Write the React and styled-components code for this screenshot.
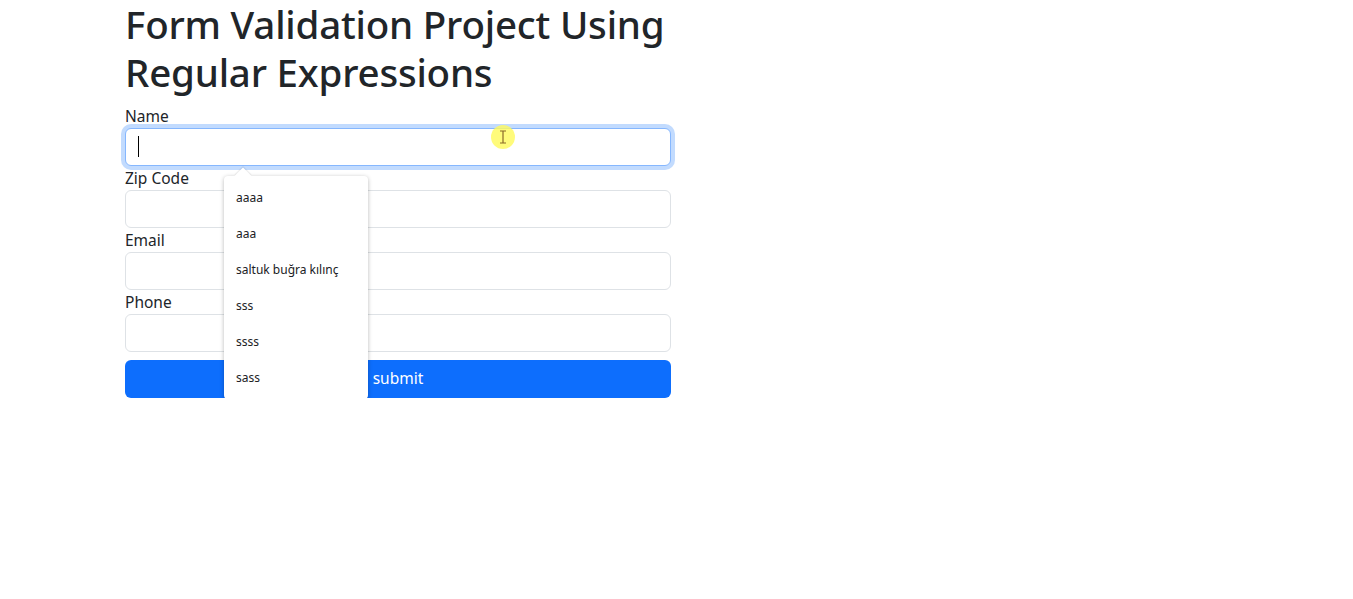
import React from "react";
import styled, { createGlobalStyle } from "styled-components";

const GlobalStyle = createGlobalStyle`
  * { box-sizing: border-box; }
  body {
    margin: 0;
    background: #ffffff;
    color: #212529;
    font-family: "Noto Sans", "Open Sans", sans-serif;
    font-size: 16px;
    line-height: 1.5;
  }
`;

const Page = styled.div`
  padding-left: 125px;
  width: 671px;
`;

const Title = styled.h1`
  margin: 0 0 8px;
  font-size: 38.5px;
  font-weight: 500;
  line-height: 48px;
  letter-spacing: -0.2px;
`;

const Form = styled.form`
  display: flex;
  flex-direction: column;
`;

const Field = styled.div`
  position: relative;
  z-index: ${(p) => (p.$raised ? 3 : "auto")};
  display: flex;
  flex-direction: column;
`;

const Label = styled.label`
  display: block;
  font-size: 15.5px;
  line-height: 24px;
  height: 24px;
`;

const InputWrap = styled.div`
  position: relative;
`;

const Input = styled.input`
  display: block;
  width: 100%;
  height: 38px;
  padding: 6px 12px;
  font: inherit;
  color: #212529;
  background: #fff;
  border: 1px solid ${(p) => (p.$focused ? "#86b7fe" : "#dee2e6")};
  border-radius: 6px;
  outline: none;
  box-shadow: ${(p) =>
    p.$focused ? "0 0 0 4px rgba(13, 110, 253, 0.25)" : "none"};
`;

const Caret = styled.span`
  position: absolute;
  left: 13px;
  top: 8px;
  width: 1px;
  height: 21px;
  background: #000;
`;

const Submit = styled.button`
  display: block;
  width: 100%;
  height: 38px;
  margin-top: 8px;
  border: none;
  border-radius: 6px;
  background: #0d6efd;
  color: #fff;
  font: inherit;
  font-size: 15.5px;
`;

const Popup = styled.div`
  position: absolute;
  left: 99px;
  top: 48px;
  width: 144px;
  padding: 4px 0 3px;
  background: #fff;
  border-radius: 4px;
  box-shadow: 0 1px 4px rgba(0, 0, 0, 0.28);
`;

const Arrow = styled.span`
  position: absolute;
  left: 13px;
  top: -6px;
  width: 12px;
  height: 12px;
  background: #fff;
  transform: rotate(45deg);
  box-shadow: -1px -1px 1px rgba(0, 0, 0, 0.08);
`;

const Option = styled.div`
  position: relative;
  height: 36px;
  padding: 0 12px;
  display: flex;
  align-items: center;
  font-size: 12px;
  color: #202124;
`;

const Highlight = styled.div`
  position: absolute;
  left: 366px;
  top: -3px;
  width: 24px;
  height: 24px;
  border-radius: 50%;
  background: rgba(255, 250, 90, 0.8);
  display: flex;
  align-items: center;
  justify-content: center;
`;

const fields = ["Zip Code", "Email", "Phone"];
const suggestions = ["aaaa", "aaa", "saltuk buğra kılınç", "sss", "ssss", "sass"];

export default function App() {
  return (
    <Page>
      <GlobalStyle />
      <Title>Form Validation Project Using Regular Expressions</Title>
      <Form onSubmit={(e) => e.preventDefault()}>
        <Field $raised>
          <Label>Name</Label>
          <InputWrap>
            <Input type="text" $focused />
            <Caret />
            <Highlight>
              <svg width="8" height="14" viewBox="0 0 8 14">
                <path
                  d="M1 1h6M4 1v12M1 13h6"
                  stroke="#8a6a2a"
                  strokeWidth="1.2"
                  fill="none"
                />
              </svg>
            </Highlight>
            <Popup>
              <Arrow />
              {suggestions.map((s) => (
                <Option key={s}>{s}</Option>
              ))}
            </Popup>
          </InputWrap>
        </Field>
        {fields.map((f) => (
          <Field key={f}>
            <Label>{f}</Label>
            <Input type="text" />
          </Field>
        ))}
        <Submit type="submit">submit</Submit>
      </Form>
    </Page>
  );
}
